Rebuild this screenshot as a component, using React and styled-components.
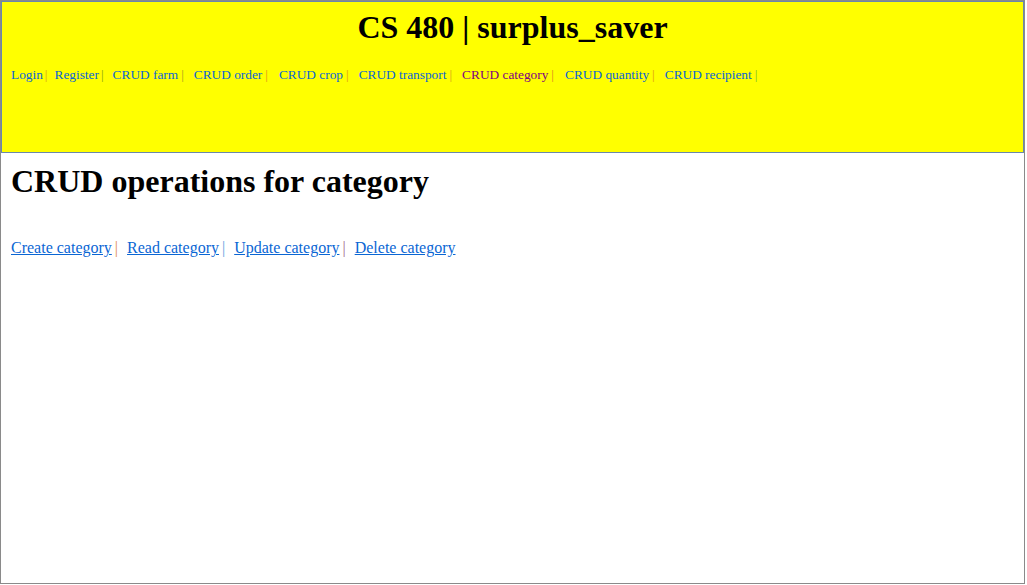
import React from "react";
import styled, { createGlobalStyle } from "styled-components";

const GlobalStyle = createGlobalStyle`
  html, body {
    margin: 0;
    padding: 0;
    background: #ffffff;
    font-family: "Liberation Serif", "Times New Roman", serif;
  }
`;

const Frame = styled.div`
  box-sizing: border-box;
  width: 1025px;
  height: 584px;
  border: 1px solid #8a8a8a;
  display: flex;
  flex-direction: column;
`;

const Banner = styled.header`
  box-sizing: border-box;
  height: 152px;
  background: #ffff00;
  border: 1px solid #6a88aa;
  padding: 7px 9px 0;
`;

const Title = styled.h1`
  margin: 0;
  text-align: center;
  font-size: 32px;
  line-height: 37px;
  font-weight: bold;
  color: #000000;
`;

const NavRow = styled.nav`
  margin-top: 21px;
  font-size: 13.33px;
  line-height: 16px;
  white-space: nowrap;
`;

const NavLink = styled.a`
  color: ${(p) => (p.visited ? "#800080" : "#0a66d4")};
  text-decoration: none;
`;

const Sep = styled.span`
  display: inline-block;
  color: ${(p) => p.tone};
  margin: 0 ${(p) => p.after}px 0 ${(p) => p.before}px;
`;

const Main = styled.main`
  flex: 1;
  padding: 10px 10px;
`;

const Heading = styled.h1`
  margin: 0;
  font-size: 32px;
  line-height: 37px;
  font-weight: bold;
  color: #000000;
`;

const ActionRow = styled.div`
  margin-top: 38px;
  font-size: 16px;
  line-height: 19px;
  white-space: nowrap;
`;

const ActionLink = styled.a`
  color: #0a66d4;
  text-decoration: underline;
`;

const navItems = [
  { label: "Login", tone: "#d9a21a", before: 2, after: 7 },
  { label: "Register", tone: "#8aa818", before: 2, after: 9 },
  { label: "CRUD farm", tone: "#a8a020", before: 3, after: 10 },
  { label: "CRUD order", tone: "#e09a18", before: 3, after: 11 },
  { label: "CRUD crop", tone: "#e09a18", before: 3, after: 10 },
  { label: "CRUD transport", tone: "#d9a21a", before: 3, after: 10 },
  { label: "CRUD category", tone: "#d98a20", before: 3, after: 11, visited: true },
  { label: "CRUD quantity", tone: "#e09a18", before: 3, after: 10 },
  { label: "CRUD recipient", tone: "#7ab830", before: 3, after: 0 },
];

const actions = [
  { label: "Create category", tone: "#e08a50" },
  { label: "Read category", tone: "#5aa0e0" },
  { label: "Update category", tone: "#a06a8a" },
  { label: "Delete category" },
];

export default function App() {
  return (
    <>
      <GlobalStyle />
      <Frame>
        <Banner>
          <Title>CS 480 | surplus_saver</Title>
          <NavRow>
            {navItems.map((item) => (
              <React.Fragment key={item.label}>
                <NavLink href="#" visited={item.visited ? 1 : 0}>
                  {item.label}
                </NavLink>
                <Sep tone={item.tone} before={item.before} after={item.after}>
                  |
                </Sep>
              </React.Fragment>
            ))}
          </NavRow>
        </Banner>
        <Main>
          <Heading>CRUD operations for category</Heading>
          <ActionRow>
            {actions.map((a) => (
              <React.Fragment key={a.label}>
                <ActionLink href="#">{a.label}</ActionLink>
                {a.tone && (
                  <Sep tone={a.tone} before={3} after={9}>
                    |
                  </Sep>
                )}
              </React.Fragment>
            ))}
          </ActionRow>
        </Main>
      </Frame>
    </>
  );
}
